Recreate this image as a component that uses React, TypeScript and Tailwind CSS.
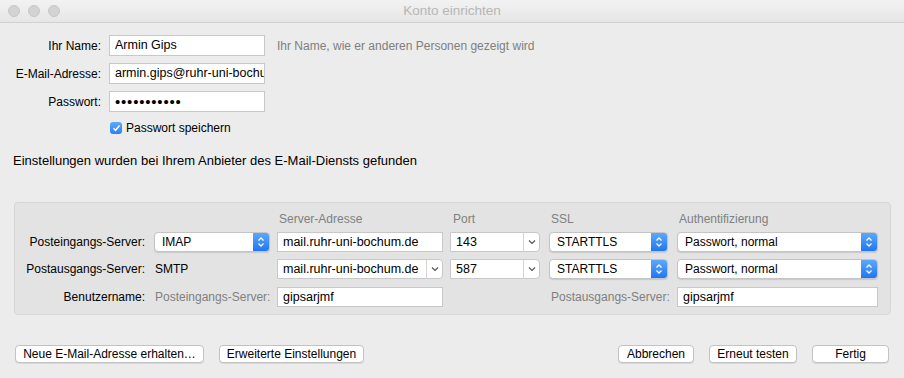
import React from "react";

const font = { fontFamily: '"Lucida Grande", "Liberation Sans", Arial, sans-serif' };

function Stepper() {
  return (
    <div className="w-[16px] h-full rounded-r-[3px] bg-gradient-to-b from-[#5ba8fb] to-[#1e76f1] flex items-center justify-center">
      <svg width="8" height="12" viewBox="0 0 8 12">
        <path d="M1.5 4.5 L4 2 L6.5 4.5" fill="none" stroke="white" strokeWidth="1.3" />
        <path d="M1.5 7.5 L4 10 L6.5 7.5" fill="none" stroke="white" strokeWidth="1.3" />
      </svg>
    </div>
  );
}

function Select({ value, w }: { value: string; w: string }) {
  return (
    <div className={`${w} h-[20px] flex items-stretch rounded-[4px] bg-white border border-[#c4c4c4] shadow-[0_1px_1px_rgba(0,0,0,0.12)]`}>
      <div className="flex-1 flex items-center pl-[7px] text-[12px] text-black leading-none whitespace-nowrap">{value}</div>
      <Stepper />
    </div>
  );
}

function Combo({ value, w }: { value: string; w: string }) {
  return (
    <div className={`${w} h-[20px] flex items-stretch bg-white border border-[#c8c8c8] rounded-r-[4px]`}>
      <div className="flex-1 min-w-0 flex items-center pl-[5px] text-[12.5px] text-black leading-none overflow-hidden whitespace-nowrap">{value}</div>
      <div className="w-[16px] shrink-0 border-l border-[#d4d4d4] flex items-center justify-center">
        <svg width="8" height="6" viewBox="0 0 8 6">
          <path d="M1 1.5 L4 4.5 L7 1.5" fill="none" stroke="#555" strokeWidth="1.2" />
        </svg>
      </div>
    </div>
  );
}

function Field({ value, w, h = "h-[21px]", extra = "text-[12.5px]" }: { value: string; w: string; h?: string; extra?: string }) {
  return (
    <div className={`${w} ${h} ${extra} bg-white border border-[#c8c8c8] flex items-center pl-[5px] text-black leading-none overflow-hidden whitespace-nowrap`}>
      {value}
    </div>
  );
}

function Btn({ label, w }: { label: string; w: string }) {
  return (
    <div className={`${w} h-[18px] bg-white rounded-[4px] border border-[#c2c2c2] shadow-[0_1px_0_rgba(0,0,0,0.08)] flex items-center justify-center text-[12px] text-black leading-none whitespace-nowrap`}>
      {label}
    </div>
  );
}

export default function App() {
  return (
    <div style={font} className="w-[904px] h-[378px] bg-[#ececec] flex flex-col overflow-hidden">
      {/* title bar */}
      <div className="h-[23px] shrink-0 bg-gradient-to-b from-[#f2f2f2] to-[#e6e6e6] border-b border-[#d1d1d1] relative flex items-center justify-center">
        <div className="absolute left-[8px] top-[5px] flex gap-[8px]">
          <div className="w-[12px] h-[12px] rounded-full bg-[#d3d3d3] border border-[#c6c6c6]" />
          <div className="w-[12px] h-[12px] rounded-full bg-[#d3d3d3] border border-[#c6c6c6]" />
          <div className="w-[12px] h-[12px] rounded-full bg-[#d3d3d3] border border-[#c6c6c6]" />
        </div>
        <span className="text-[13.5px] text-[#b6b6b6]">Konto einrichten</span>
      </div>

      {/* top form */}
      <div className="flex flex-col pt-[12px] gap-[7px]">
        <div className="flex items-center h-[21px]">
          <div className="w-[101px] text-right text-[12px] text-black whitespace-nowrap">Ihr Name:</div>
          <div className="ml-[8px]"><Field value="Armin Gips" w="w-[156px]" /></div>
          <div className="ml-[12px] text-[12px] text-[#7f7f7f] whitespace-nowrap">Ihr Name, wie er anderen Personen gezeigt wird</div>
        </div>
        <div className="flex items-center h-[21px]">
          <div className="w-[101px] text-right text-[12px] text-black whitespace-nowrap">E-Mail-Adresse:</div>
          <div className="ml-[8px]"><Field value="armin.gips@ruhr-uni-bochum.de" w="w-[156px]" /></div>
        </div>
        <div className="flex items-center h-[21px]">
          <div className="w-[101px] text-right text-[12px] text-black whitespace-nowrap">Passwort:</div>
          <div className="ml-[8px]"><Field value="•••••••••••" w="w-[156px]" extra="text-[15px] tracking-[0.8px]" /></div>
        </div>
        <div className="flex items-center h-[14px] ml-[110px] mt-[2px] gap-[4px]">
          <div className="w-[12px] h-[12px] rounded-[3px] bg-gradient-to-b from-[#5ea9fc] to-[#2a80f4] flex items-center justify-center">
            <svg width="9" height="8" viewBox="0 0 9 8">
              <path d="M1.5 4.2 L3.6 6.3 L7.5 1.5" fill="none" stroke="white" strokeWidth="1.5" />
            </svg>
          </div>
          <span className="text-[12px] text-black leading-none">Passwort speichern</span>
        </div>
      </div>

      <div className="ml-[13px] mt-[18px] h-[14px] flex items-center text-[13px] text-black leading-none whitespace-nowrap">
        Einstellungen wurden bei Ihrem Anbieter des E-Mail-Diensts gefunden
      </div>

      {/* panel */}
      <div className="ml-[14px] mt-[35px] w-[877px] h-[113px] shrink-0 bg-[#e3e3e3] border border-[#d6d6d6] rounded-[4px] flex flex-col pt-[9px]">
        <div className="flex items-center h-[14px] text-[12px] text-[#808080] leading-none whitespace-nowrap">
          <div className="w-[264px]" />
          <div className="w-[174px]">Server-Adresse</div>
          <div className="w-[98px]">Port</div>
          <div className="w-[128px]">SSL</div>
          <div>Authentifizierung</div>
        </div>
        <div className="flex items-center h-[20px] mt-[6px]">
          <div className="w-[130px] text-right text-[12px] text-black whitespace-nowrap">Posteingangs-Server:</div>
          <div className="ml-[9px]"><Select value="IMAP" w="w-[116px]" /></div>
          <div className="ml-[7px]"><Field value="mail.ruhr-uni-bochum.de" w="w-[166px]" h="h-[20px]" /></div>
          <div className="ml-[7px]"><Combo value="143" w="w-[90px]" /></div>
          <div className="ml-[9px]"><Select value="STARTTLS" w="w-[119px]" /></div>
          <div className="ml-[9px]"><Select value="Passwort, normal" w="w-[201px]" /></div>
        </div>
        <div className="flex items-center h-[20px] mt-[7px]">
          <div className="w-[130px] text-right text-[12px] text-black whitespace-nowrap">Postausgangs-Server:</div>
          <div className="ml-[10px] w-[115px] text-[12px] text-black">SMTP</div>
          <div className="ml-[7px]"><Combo value="mail.ruhr-uni-bochum.de" w="w-[166px]" /></div>
          <div className="ml-[7px]"><Combo value="587" w="w-[90px]" /></div>
          <div className="ml-[9px]"><Select value="STARTTLS" w="w-[119px]" /></div>
          <div className="ml-[9px]"><Select value="Passwort, normal" w="w-[201px]" /></div>
        </div>
        <div className="flex items-center h-[20px] mt-[8px]">
          <div className="w-[130px] text-right text-[12px] text-black whitespace-nowrap">Benutzername:</div>
          <div className="ml-[10px] w-[122px] text-[12px] text-[#808080] whitespace-nowrap">Posteingangs-Server:</div>
          <div><Field value="gipsarjmf" w="w-[166px]" h="h-[20px]" /></div>
          <div className="ml-[108px] w-[126px] text-[12px] text-[#808080] whitespace-nowrap">Postausgangs-Server:</div>
          <div><Field value="gipsarjmf" w="w-[201px]" h="h-[20px]" /></div>
        </div>
      </div>

      {/* bottom buttons */}
      <div className="flex items-center mt-[30px] px-[15px]">
        <Btn label="Neue E-Mail-Adresse erhalten…" w="w-[189px]" />
        <div className="ml-[15px]"><Btn label="Erweiterte Einstellungen" w="w-[145px]" /></div>
        <div className="ml-auto flex gap-[15px]">
          <Btn label="Abbrechen" w="w-[76px]" />
          <Btn label="Erneut testen" w="w-[88px]" />
          <Btn label="Fertig" w="w-[77px]" />
        </div>
      </div>
    </div>
  );
}
